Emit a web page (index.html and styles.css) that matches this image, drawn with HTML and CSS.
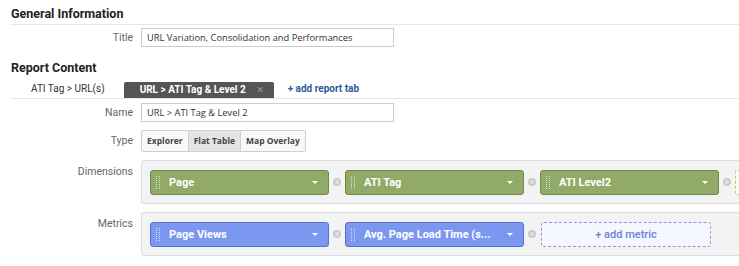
FILE: index.html
```
<!DOCTYPE html>
<html>
<head>
<meta charset="utf-8">
<title>Report Editor</title>
<link rel="stylesheet" href="styles.css">
</head>
<body>
<div class="page">
  <h2 class="section-title">General Information</h2>
  <div class="field">
    <label class="label">Title</label>
    <div class="input">URL Variation, Consolidation and Performances</div>
  </div>

  <h2 class="section-title second">Report Content</h2>
  <div class="tabs">
    <span class="tab">ATI Tag &gt; URL(s)</span>
    <span class="tab active">URL &gt; ATI Tag &amp; Level 2 <span class="close">&times;</span></span>
    <span class="add-tab">+ add report tab</span>
  </div>

  <div class="field name-row">
    <label class="label">Name</label>
    <div class="input">URL &gt; ATI Tag &amp; Level 2</div>
  </div>

  <div class="field type-row">
    <label class="label">Type</label>
    <div class="btn-group">
      <span class="btn">Explorer</span>
      <span class="btn on">Flat Table</span>
      <span class="btn">Map Overlay</span>
    </div>
  </div>

  <div class="field top dim-row">
    <label class="label">Dimensions</label>
    <div class="well">
      <div class="pill green"><i class="grip"></i>Page<b class="caret"></b></div>
      <i class="remove"></i>
      <div class="pill green"><i class="grip"></i>ATI Tag<b class="caret"></b></div>
      <i class="remove"></i>
      <div class="pill green"><i class="grip"></i>ATI Level2<b class="caret"></b></div>
      <i class="remove"></i>
      <div class="add-box green-add"></div>
    </div>
  </div>

  <div class="field top met-row">
    <label class="label">Metrics</label>
    <div class="well">
      <div class="pill blue"><i class="grip"></i>Page Views<b class="caret"></b></div>
      <i class="remove"></i>
      <div class="pill blue"><i class="grip"></i>Avg. Page Load Time (s...<b class="caret"></b></div>
      <i class="remove"></i>
      <div class="add-box blue-add">+ add metric</div>
    </div>
  </div>
</div>
</body>
</html>
```

FILE: styles.css
```
*{
  margin:0;
  padding:0;
  box-sizing:border-box;
}
body{
  background:#fff;
  font-family:Roboto, "Liberation Sans", sans-serif;
  color:#333;
  overflow:hidden;
}
.page{
  width:739px;
  height:266px;
  overflow:hidden;
}
.section-title{
  font-size:12.5px;
  font-weight:bold;
  color:#222;
  margin-left:10px;
  padding:7px 0 3px 1px;
  border-bottom:1px solid #e6e6e6;
  line-height:14px;
}
.section-title.second{
  margin-top:7px;
  border-bottom:none;
  padding-bottom:0;
}
.field{
  display:flex;
  align-items:center;
  gap:8px;
  margin-top:3px;
}
.field.top{
  align-items:flex-start;
}
.label{
  width:133px;
  flex-shrink:0;
  text-align:right;
  font-size:10.5px;
  color:#666;
}
.input{
  width:253px;
  height:19px;
  border:1px solid #ccc;
  font-family:"Open Sans", sans-serif;
  font-size:9.3px;
  color:#333;
  line-height:17px;
  padding-left:5px;
}

/* tabs */
.tabs{
  display:flex;
  align-items:flex-end;
  margin:7px 0 0 10px;
  height:17px;
  border-bottom:1px solid #e6e6e6;
  font-size:10px;
}
.tab{
  padding:0 0 2px 21px;
  color:#333;
  line-height:14px;
}
.tab.active{
  margin-left:19px;
  width:150px;
  height:16px;
  background:#555;
  color:#fff;
  font-weight:bold;
  padding:1px 0 0 16px;
  border-radius:2px 2px 0 0;
}
.close{
  color:#999;
  font-weight:normal;
  margin-left:9px;
  font-size:11px;
}
.add-tab{
  color:#2a5a9c;
  font-weight:bold;
  margin-left:14px;
  padding-bottom:2px;
  line-height:14px;
}
.name-row{
  margin-top:4px;
}
.type-row{
  margin-top:8px;
}
.type-row .label{
  margin-top:-2px;
}
.btn-group{
  display:flex;
  height:22px;
  border:1px solid #d0d0d0;
  border-radius:2px;
  background:#f8f8f8;
}
.btn{
  font-family:"Open Sans", sans-serif;
  font-size:8.5px;
  font-weight:bold;
  color:#444;
  line-height:20px;
  padding:0 5px;
  border-left:1px solid #d0d0d0;
}
.btn:first-child{
  border-left:none;
}
.btn.on{
  background:#e4e4e4;
}

/* dimension / metric wells */
.dim-row{
  margin-top:8px;
}
.met-row{
  margin-top:8px;
}
.top .label{
  margin-top:5px;
}
.well{
  display:flex;
  align-items:center;
  height:44px;
  flex:1;
  min-width:0;
  overflow:hidden;
  background:#f3f3f3;
  border:1px solid #dedede;
  border-right:none;
  border-radius:3px 0 0 3px;
  padding-left:8px;
}
.pill{
  position:relative;
  flex-shrink:0;
  width:179px;
  height:25px;
  border-radius:3px;
  color:#fff;
  font-size:11px;
  font-weight:bold;
  line-height:23px;
  padding-left:18px;
}
.pill.green{
  background:#92aa67;
  border:1px solid #6f8a48;
}
.pill.blue{
  background:#7b97f0;
  border:1px solid #5572d2;
}
.grip{
  position:absolute;
  left:5px;
  top:5px;
  width:4px;
  height:13px;
  border-left:1px dotted rgba(255,255,255,0.7);
  border-right:1px dotted rgba(255,255,255,0.7);
}
.caret{
  position:absolute;
  right:10px;
  top:10px;
  width:0;
  height:0;
  border-left:3px solid transparent;
  border-right:3px solid transparent;
  border-top:3px solid #fff;
}
.remove{
  flex-shrink:0;
  width:8px;
  height:8px;
  border-radius:50%;
  background:#e0e0e0;
  border:2px solid #cacaca;
  margin:0 4px;
}
.add-box{
  flex-shrink:0;
  height:25px;
  border-radius:3px;
  font-size:11px;
  line-height:23px;
  text-align:center;
}
.green-add{
  width:60px;
  border:1px dashed #b8c96a;
  background:#fbfdf0;
}
.blue-add{
  width:170px;
  margin-left:1px;
  border:1px dashed #8d9ae0;
  background:#f5f7fe;
  color:#6d80d6;
  font-weight:500;
}
```
